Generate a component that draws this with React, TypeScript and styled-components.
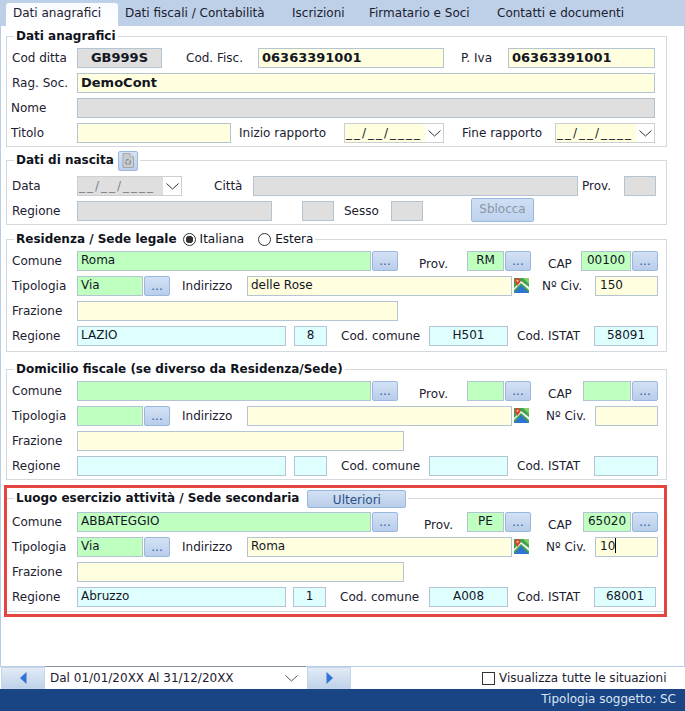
import { FC, ReactNode } from 'react'
import styled, { createGlobalStyle } from 'styled-components'

const Global = createGlobalStyle`
  html, body { margin: 0; padding: 0; background: #fff; }
  * { box-sizing: border-box; }
`

const Page = styled.div`
  width: 685px;
  height: 711px;
  display: flex;
  flex-direction: column;
  font-family: "DejaVu Sans", Verdana, sans-serif;
  font-size: 12px;
  color: #1c2030;
  overflow: hidden;
`

const TabBar = styled.div`
  height: 26px;
  flex: none;
  padding-left: 6px;
  display: flex;
  align-items: flex-end;
  background: #bdd0e7;
`

const Tab = styled.div<{ $w: number; $active?: boolean }>`
  width: ${(p) => p.$w}px;
  height: 23px;
  padding: 2px 0 0 7px;
  line-height: 16px;
  border-radius: 3px 3px 0 0;
  background: ${(p) => (p.$active ? 'linear-gradient(#f8fbff, #ffffff)' : 'transparent')};
`

const Body = styled.div`
  flex: 1;
  padding: 3px 17px 0 6px;
  border-left: 1px solid #b8cce4;
  border-right: 1px solid #b8cce4;
  margin: 0;
`

const Group = styled.fieldset<{ $mt?: number; $pt: number; $pb: number }>`
  margin: ${(p) => p.$mt ?? 0}px 0 0 -1px;
  padding: ${(p) => p.$pt}px 0 ${(p) => p.$pb}px;
  min-width: 0;
  border: 1px solid #d5d9dd;
  display: flex;
  flex-direction: column;
  gap: 5px;
`

const Legend = styled.legend`
  height: 15px;
  margin-left: 7px;
  padding: 0 2px;
  display: flex;
  align-items: center;
  font-weight: bold;
  line-height: 15px;
  color: #10131c;
`

const Highlight = styled.div`
  position: relative;
  margin-top: 11px;
  &::after {
    content: '';
    position: absolute;
    left: -3px;
    right: 0;
    top: -6px;
    bottom: -5px;
    border: 3px solid #e4463f;
    pointer-events: none;
  }
`

const Row = styled.div`
  height: 20px;
  display: flex;
  align-items: stretch;
`

// width of a label runs up to the next control, so the columns stay lined up
const Label = styled.span<{ $w: number; $ml?: number; $dy?: number }>`
  width: ${(p) => p.$w}px;
  flex: none;
  padding-left: ${(p) => p.$ml ?? 0}px;
  padding-top: ${(p) => p.$dy ?? 0}px;
  line-height: 20px;
  white-space: nowrap;
`

const tones = {
  yellow: '#ffffdf',
  green: '#bfffbf',
  cyan: '#dfffff',
  grey: '#dfdfdf',
}

const Field = styled.div<{
  $w: number
  $tone: keyof typeof tones
  $bold?: boolean
  $center?: boolean
  $pl?: number
}>`
  width: ${(p) => p.$w}px;
  flex: none;
  padding-left: ${(p) => p.$pl ?? 3}px;
  border: 1px solid #b3c5d3;
  background: ${(p) => tones[p.$tone]};
  line-height: 17px;
  white-space: nowrap;
  font-weight: ${(p) => (p.$bold ? 'bold' : 'normal')};
  font-size: ${(p) => (p.$bold ? '13px' : '12px')};
  text-align: ${(p) => (p.$center ? 'center' : 'left')};
  color: #14161f;
`

const Dots = styled.div`
  width: 26px;
  flex: none;
  margin-left: 1px;
  border: 1px solid #9ab8de;
  border-radius: 2px;
  background: linear-gradient(#d3e1f4, #b9cdea);
  text-align: center;
  line-height: 18px;
  color: #2c5ea8;
`

const DateBox = styled.div<{ $w: number; $disabled?: boolean }>`
  width: ${(p) => p.$w}px;
  flex: none;
  display: flex;
  border: 1px solid #cdd0d3;
  background: #fff;
  color: ${(p) => (p.$disabled ? '#7d8288' : '#1c2030')};
`

const DateMask = styled.div<{ $w: number; $disabled?: boolean }>`
  width: ${(p) => p.$w}px;
  padding-left: 1px;
  background: ${(p) => (p.$disabled ? '#dfdfdf' : '#ffffdf')};
  letter-spacing: 2px;
  line-height: 18px;
  white-space: nowrap;
`

const ChevronWrap = styled.div`
  flex: 1;
  display: flex;
  align-items: center;
  justify-content: center;
`

const GhostButton = styled.div`
  width: 63px;
  height: 24px;
  flex: none;
  margin: -3px 0 0 48px;
  border: 1px solid #9ab8de;
  border-radius: 2px;
  background: linear-gradient(#cfdff3, #bfd3ee);
  color: #8d97a5;
  text-align: center;
  line-height: 20px;
`

const IconButton = styled.div`
  width: 20px;
  height: 20px;
  flex: none;
  margin-left: 4px;
  display: flex;
  align-items: center;
  justify-content: center;
  border: 1px solid #9ab8de;
  border-radius: 2px;
  background: linear-gradient(#d6e3f4, #bcd0ea);
`

const UlterioriButton = styled.div`
  width: 99px;
  height: 18px;
  flex: none;
  margin-left: 8px;
  border: 1px solid #9ab8de;
  border-radius: 2px;
  background: linear-gradient(#d3e1f4, #b9cdea);
  color: #2c4f86;
  font-weight: normal;
  text-align: center;
  line-height: 18px;
`

const RadioItem = styled.span<{ $ml: number }>`
  margin-left: ${(p) => p.$ml}px;
  display: flex;
  align-items: center;
  gap: 4px;
  font-weight: normal;
`

const RadioDot = styled.span<{ $on?: boolean }>`
  width: 13px;
  height: 13px;
  border-radius: 50%;
  border: 1px solid #333;
  background: ${(p) =>
    p.$on ? 'radial-gradient(circle, #333 0 3.5px, #fff 4px)' : '#fff'};
`

const MapSlot = styled.div`
  width: 15px;
  flex: none;
  margin: 2px 0 0 2px;
`

const Caret = styled.span`
  display: inline-block;
  width: 1px;
  height: 15px;
  vertical-align: -3px;
  background: #000;
`

const NavBar = styled.div`
  height: 23px;
  flex: none;
  display: flex;
  border-top: 1px solid #b8cce4;
  padding-left: 1px;
`

const NavButton = styled.div<{ $ml?: number }>`
  width: 44px;
  flex: none;
  margin-left: ${(p) => p.$ml ?? 0}px;
  display: flex;
  align-items: center;
  justify-content: center;
  border: 1px solid #c6d6ea;
  background: linear-gradient(#e3ebf6, #bfd2ea);
`

const PeriodSelect = styled.div`
  width: 261px;
  flex: none;
  margin-top: -1px;
  padding-left: 5px;
  display: flex;
  align-items: center;
  justify-content: space-between;
  border-top: 1px solid #8894a3;
  background: #fff;
  white-space: nowrap;
`

const SelectArrow = styled.span`
  display: flex;
  margin-right: 8px;
`

const AllToggle = styled.label`
  margin-left: 131px;
  display: flex;
  align-items: center;
  gap: 4px;
`

const CheckBox = styled.span`
  width: 13px;
  height: 13px;
  border: 1px solid #333;
  background: #fff;
`

const StatusBar = styled.div`
  height: 22px;
  flex: none;
  padding-right: 9px;
  background: #1a4585;
  color: #d9e4f2;
  text-align: right;
  line-height: 21px;
`

const Chevron: FC<{ color?: string }> = ({ color = '#333' }) => (
  <svg width="13" height="7" viewBox="0 0 13 7" fill="none">
    <path d="M0.5 0.5 L6.5 6 L12.5 0.5" stroke={color} strokeWidth="1" />
  </svg>
)

const MapIcon: FC = () => (
  <svg width="15" height="15" viewBox="0 0 15 15">
    <rect x="0" y="0" width="15" height="15" fill="#3fa34d" />
    <path d="M0 15 L7 7 L15 15 Z" fill="#2f74d0" />
    <path d="M0 12 L7 5 L15 12 L15 9 L7 3 L0 10 Z" fill="#f4f4ee" />
    <path d="M15 0 L9 0 L15 6 Z" fill="#8ccf6a" />
    <path d="M3.5 0 C1.5 0 0.6 1.5 0.6 2.8 C0.6 4.6 2.6 6 3.5 8 C4.4 6 6.4 4.6 6.4 2.8 C6.4 1.5 5.5 0 3.5 0 Z" fill="#d9432f" />
    <circle cx="3.5" cy="2.8" r="1" fill="#f5d0a0" />
  </svg>
)

const DocIcon: FC = () => (
  <svg width="12" height="15" viewBox="0 0 12 15">
    <path d="M1 0.5 H8 L11.5 4 V14.5 H1 Z" fill="#c9ccd0" stroke="#a3a8ae" />
    <path d="M8 0.5 V4 H11.5" fill="#e6e8ea" stroke="#a3a8ae" />
    <circle cx="6" cy="9" r="2.4" fill="none" stroke="#7e858c" strokeWidth="1.2" strokeDasharray="3 1" />
  </svg>
)

const TriangleLeft: FC = () => (
  <svg width="7" height="12" viewBox="0 0 7 12">
    <path d="M6.5 0 V12 L0 6 Z" fill="#2f74d6" />
  </svg>
)

const TriangleRight: FC = () => (
  <svg width="7" height="12" viewBox="0 0 7 12">
    <path d="M0.5 0 V12 L7 6 Z" fill="#2f74d6" />
  </svg>
)

const DateField: FC<{ w: number; mask: number; disabled?: boolean }> = ({ w, mask, disabled }) => (
  <DateBox $w={w} $disabled={disabled}>
    <DateMask $w={mask} $disabled={disabled}>__/__/____</DateMask>
    <ChevronWrap><Chevron /></ChevronWrap>
  </DateBox>
)

interface AddressProps {
  legend: ReactNode
  comune?: string
  prov?: string
  cap?: string
  tipologia?: string
  indirizzo?: string
  civico?: ReactNode
  regione?: string
  regCode?: string
  codComune?: string
  istat?: string
  labelMl?: number
  provLabelW: number
  provLabelMl: number
  capFieldW: number
  capLabelW: number
  civLabelMl: number
  frazioneW: number
  regCodeMl: number
  regCodeW: number
  istatW: number
  pt: number
  pb: number
  mt?: number
}

const AddressGroup: FC<AddressProps> = (p) => (
  <Group $mt={p.mt} $pt={p.pt} $pb={p.pb}>
    {p.legend}
    <Row>
      <Label $w={70} $ml={5}>Comune</Label>
      <Field $w={294} $tone="green">{p.comune}</Field>
      <Dots>...</Dots>
      <Label $w={p.provLabelW} $ml={p.provLabelMl} $dy={3}>Prov.</Label>
      <Field $w={37} $tone="green" $center $pl={0}>{p.prov}</Field>
      <Dots>...</Dots>
      <Label $w={p.capLabelW} $ml={17} $dy={3}>CAP</Label>
      <Field $w={p.capFieldW} $tone="green" $center $pl={0}>{p.cap}</Field>
      <Dots>...</Dots>
    </Row>
    <Row>
      <Label $w={70} $ml={5}>Tipologia</Label>
      <Field $w={66} $tone="green">{p.tipologia}</Field>
      <Dots>...</Dots>
      <Label $w={77} $ml={12}>Indirizzo</Label>
      <Field $w={265} $tone="yellow">{p.indirizzo}</Field>
      <MapSlot><MapIcon /></MapSlot>
      <Label $w={66} $ml={p.civLabelMl}>Nº Civ.</Label>
      <Field $w={63} $tone="yellow" $pl={4}>{p.civico}</Field>
    </Row>
    <Row>
      <Label $w={70} $ml={5}>Frazione</Label>
      <Field $w={p.frazioneW} $tone="yellow" />
    </Row>
    <Row>
      <Label $w={70} $ml={5}>Regione</Label>
      <Field $w={209} $tone="cyan">{p.regione}</Field>
      <Label $w={p.regCodeMl} />
      <Field $w={p.regCodeW} $tone="cyan" $center $pl={0}>{p.regCode}</Field>
      <Label $w={429 - 286 - p.regCodeMl - p.regCodeW} $ml={14}>Cod. comune</Label>
      <Field $w={79} $tone="cyan" $center $pl={0}>{p.codComune}</Field>
      <Label $w={86} $ml={9}>Cod. ISTAT</Label>
      <Field $w={p.istatW} $tone="cyan" $center $pl={0}>{p.istat}</Field>
    </Row>
  </Group>
)

const App: FC = () => (
  <Page>
    <Global />
    <TabBar>
      <Tab $w={112} $active>Dati anagrafici</Tab>
      <Tab $w={167}>Dati fiscali / Contabilità</Tab>
      <Tab $w={77}>Iscrizioni</Tab>
      <Tab $w={128}>Firmatario e Soci</Tab>
      <Tab $w={170}>Contatti e documenti</Tab>
    </TabBar>
    <Body>
      <Group $pt={4} $pb={3}>
        <Legend>Dati anagrafici</Legend>
        <Row>
          <Label $w={70} $ml={5}>Cod ditta</Label>
          <Field $w={85} $tone="grey" $bold $center $pl={0}>GB999S</Field>
          <Label $w={96} $ml={24}>Cod. Fisc.</Label>
          <Field $w={186} $tone="yellow" $bold>06363391001</Field>
          <Label $w={64} $ml={17}>P. Iva</Label>
          <Field $w={147} $tone="yellow" $bold>06363391001</Field>
        </Row>
        <Row>
          <Label $w={70} $ml={5}>Rag. Soc.</Label>
          <Field $w={578} $tone="yellow" $bold>DemoCont</Field>
        </Row>
        <Row>
          <Label $w={70} $ml={4}>Nome</Label>
          <Field $w={578} $tone="grey" />
        </Row>
        <Row>
          <Label $w={70} $ml={4}>Titolo</Label>
          <Field $w={154} $tone="yellow" />
          <Label $w={113} $ml={8}>Inizio rapporto</Label>
          <DateField w={100} mask={80} />
          <Label $w={111} $ml={18}>Fine rapporto</Label>
          <DateField w={100} mask={80} />
        </Row>
      </Group>
      <Group $mt={6} $pt={8} $pb={3}>
        <Legend>
          Dati di nascita
          <IconButton><DocIcon /></IconButton>
        </Legend>
        <Row>
          <Label $w={70} $ml={5}>Data</Label>
          <DateField w={105} mask={85} disabled />
          <Label $w={71} $ml={32}>Città</Label>
          <Field $w={325} $tone="grey" />
          <Label $w={46} $ml={4}>Prov.</Label>
          <Field $w={32} $tone="grey" />
        </Row>
        <Row>
          <Label $w={70} $ml={5}>Regione</Label>
          <Field $w={195} $tone="grey" />
          <Label $w={30} />
          <Field $w={32} $tone="grey" />
          <Label $w={57} $ml={10}>Sesso</Label>
          <Field $w={32} $tone="grey" />
          <GhostButton>Sblocca</GhostButton>
        </Row>
      </Group>
      <AddressGroup
        mt={7}
        pt={4}
        pb={5}
        legend={
          <Legend>
            Residenza / Sede legale
            <RadioItem $ml={6}><RadioDot $on />Italiana</RadioItem>
            <RadioItem $ml={14}><RadioDot />Estera</RadioItem>
          </Legend>
        }
        comune="Roma"
        prov="RM"
        cap="00100"
        tipologia="Via"
        indirizzo="delle Rose"
        civico="150"
        regione="LAZIO"
        regCode="8"
        codComune="H501"
        istat="58091"
        provLabelW={69}
        provLabelMl={21}
        capFieldW={50}
        capLabelW={50}
        civLabelMl={13}
        frazioneW={321}
        regCodeMl={8}
        regCodeW={33}
        istatW={64}
      />
      <AddressGroup
        mt={10}
        pt={4}
        pb={3}
        legend={<Legend>Domicilio fiscale (se diverso da Residenza/Sede)</Legend>}
        provLabelW={69}
        provLabelMl={21}
        capFieldW={48}
        capLabelW={52}
        civLabelMl={17}
        frazioneW={327}
        regCodeMl={8}
        regCodeW={33}
        istatW={64}
      />
      <Highlight>
        <AddressGroup
          pt={6}
          pb={4}
          legend={
            <Legend>
              Luogo esercizio attività / Sede secondaria
              <UlterioriButton>Ulteriori</UlterioriButton>
            </Legend>
          }
          comune="ABBATEGGIO"
          prov="PE"
          cap="65020"
          tipologia="Via"
          indirizzo="Roma"
          civico={<>10<Caret /></>}
          regione="Abruzzo"
          regCode="1"
          codComune="A008"
          istat="68001"
          provLabelW={69}
          provLabelMl={26}
          capFieldW={48}
          capLabelW={52}
          civLabelMl={17}
          frazioneW={327}
          regCodeMl={7}
          regCodeW={33}
          istatW={62}
        />
      </Highlight>
    </Body>
    <NavBar>
      <NavButton><TriangleLeft /></NavButton>
      <PeriodSelect>
        Dal 01/01/20XX Al 31/12/20XX
        <SelectArrow><Chevron color="#555" /></SelectArrow>
      </PeriodSelect>
      <NavButton $ml={1}><TriangleRight /></NavButton>
      <AllToggle><CheckBox />Visualizza tutte le situazioni</AllToggle>
    </NavBar>
    <StatusBar>Tipologia soggetto: SC</StatusBar>
  </Page>
)

export default App
